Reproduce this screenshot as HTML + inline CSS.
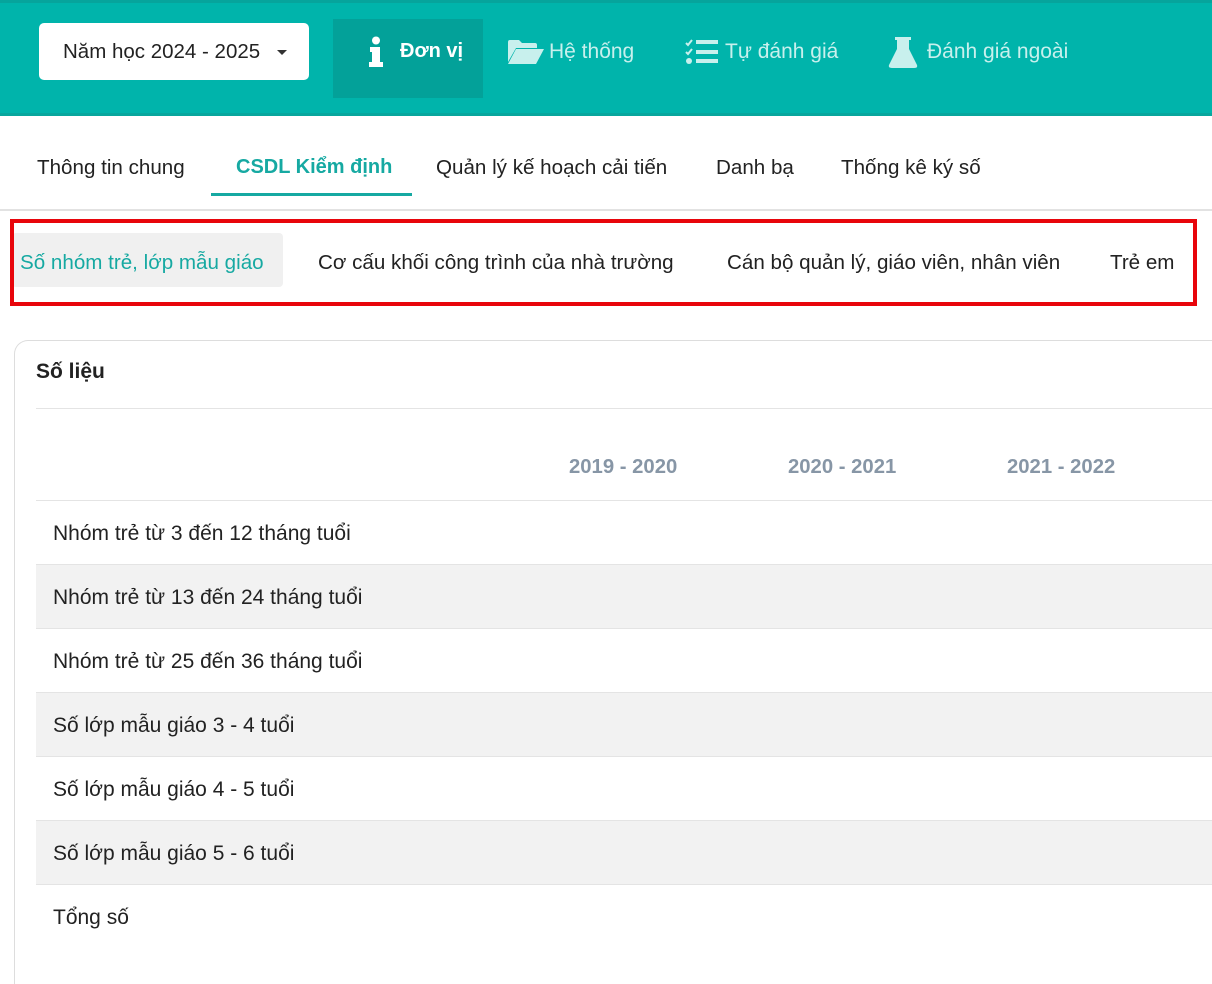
<!DOCTYPE html>
<html><head><meta charset="utf-8">
<style>
*{margin:0;padding:0;box-sizing:border-box}
html{width:1212px;height:984px;overflow:hidden}
body{width:1212px;height:984px;overflow:hidden;background:#fff;font-family:"Liberation Sans",Arial,sans-serif;position:relative;color:#222}
.hdr{position:absolute;left:0;top:0;width:1212px;height:116px;background:#00b4ab;border-top:3px solid #06a49c;border-bottom:3px solid #08a69d}
.sel{position:absolute;left:39px;top:23px;width:270px;height:57px;background:#fff;border-radius:5px;font-size:20.5px;line-height:58px;padding-left:24px;color:#222}
.sel:after{content:"";position:absolute;left:238px;top:27px;border-left:5px solid transparent;border-right:5px solid transparent;border-top:5px solid #333}
.act{position:absolute;left:333px;top:19px;width:150px;height:79px;background:#03a199}
.nav{position:absolute;top:40px;font-size:21px;color:#c8f0ed;white-space:nowrap}
.tabs div{position:absolute;top:156px;font-size:20.6px;color:#222;white-space:nowrap}
.ul{position:absolute;left:211px;top:193px;width:201px;height:3px;background:#16a9a2}
.gl{position:absolute;left:0;top:209px;width:1212px;height:2px;background:#e2e2e2}
.red{position:absolute;left:10px;top:219px;width:1187px;height:87px;border:4px solid #e8050b}
.pill{position:absolute;left:12px;top:233px;width:271px;height:54px;background:#f0f0f0;border-radius:4px}
.st{position:absolute;top:251px;font-size:20.6px;color:#222;white-space:nowrap}
.card{position:absolute;left:14px;top:340px;width:1198px;height:644px;border:1px solid #ddd;border-right:none;border-bottom:none;border-radius:14px 0 0 0}
.row{position:absolute;left:36px;width:1176px;height:64px;border-top:1px solid #e4e4e4;font-size:21px;line-height:66px;padding-left:17px;color:#222}
.g{background:#f2f2f2}
.yr{position:absolute;top:456px;font-size:20.3px;font-weight:bold;color:#8796a6}
</style></head><body>
<div class="hdr"></div>
<div class="sel">Năm học 2024 - 2025</div>
<div class="act"></div>
<svg style="position:absolute;left:368px;top:36px" width="16" height="32" viewBox="0 0 16 32"><circle cx="8" cy="4.5" r="4" fill="#fff"/><path d="M2 11h10v15h3v5H1v-5h3V16H2z" fill="#fff"/></svg>
<div class="nav" style="left:400px;color:#fff;font-weight:bold;font-size:20px">Đơn vị</div>
<svg style="position:absolute;left:507px;top:39px" width="38" height="26" viewBox="0 0 38 26"><path d="M1 3q0-2 2-2h9l3 3h13q2 0 2 2v3H9l-8 14z" fill="#c8f0ed"/><path d="M9 10h28l-8 15H1z" fill="#c8f0ed"/></svg>
<div class="nav" style="left:549px">Hệ thống</div>
<svg style="position:absolute;left:685px;top:38px" width="34" height="28" viewBox="0 0 34 28"><path d="M1 5l2 2 4-5M1 14l2 2 4-5" stroke="#c8f0ed" stroke-width="2" fill="none"/><circle cx="4" cy="23" r="3" fill="#c8f0ed"/><rect x="11" y="2" width="22" height="4" fill="#c8f0ed"/><rect x="11" y="12" width="22" height="4" fill="#c8f0ed"/><rect x="11" y="21" width="22" height="4" fill="#c8f0ed"/></svg>
<div class="nav" style="left:725px">Tự đánh giá</div>
<svg style="position:absolute;left:888px;top:35px" width="30" height="34" viewBox="0 0 30 34"><path d="M7 2h16v3h-2v9l8 16q1 3-3 3H4q-4 0-3-3l8-16V5H7z" fill="#c8f0ed"/></svg>
<div class="nav" style="left:927px">Đánh giá ngoài</div>

<div class="tabs">
<div style="left:37px">Thông tin chung</div>
<div style="left:236px;color:#16a9a2;font-weight:bold;font-size:20px">CSDL Kiểm định</div>
<div style="left:436px">Quản lý kế hoạch cải tiến</div>
<div style="left:716px">Danh bạ</div>
<div style="left:841px">Thống kê ký số</div>
</div>
<div class="ul"></div>
<div class="gl"></div>
<div class="pill"></div>
<div class="red"></div>
<div class="st" style="left:20px;color:#16a9a2">Số nhóm trẻ, lớp mẫu giáo</div>
<div class="st" style="left:318px">Cơ cấu khối công trình của nhà trường</div>
<div class="st" style="left:727px">Cán bộ quản lý, giáo viên, nhân viên</div>
<div class="st" style="left:1110px">Trẻ em</div>

<div class="card"></div>
<div style="position:absolute;left:36px;top:360px;font-size:21px;font-weight:bold;color:#222">Số liệu</div>
<div style="position:absolute;left:36px;top:408px;width:1176px;height:1px;background:#e4e4e4"></div>
<div class="yr" style="left:569px">2019 - 2020</div>
<div class="yr" style="left:788px">2020 - 2021</div>
<div class="yr" style="left:1007px">2021 - 2022</div>
<div class="row" style="top:500px">Nhóm trẻ từ 3 đến 12 tháng tuổi</div>
<div class="row g" style="top:564px">Nhóm trẻ từ 13 đến 24 tháng tuổi</div>
<div class="row" style="top:628px">Nhóm trẻ từ 25 đến 36 tháng tuổi</div>
<div class="row g" style="top:692px">Số lớp mẫu giáo 3 - 4 tuổi</div>
<div class="row" style="top:756px">Số lớp mẫu giáo 4 - 5 tuổi</div>
<div class="row g" style="top:820px">Số lớp mẫu giáo 5 - 6 tuổi</div>
<div class="row" style="top:884px">Tổng số</div>
</body></html>
